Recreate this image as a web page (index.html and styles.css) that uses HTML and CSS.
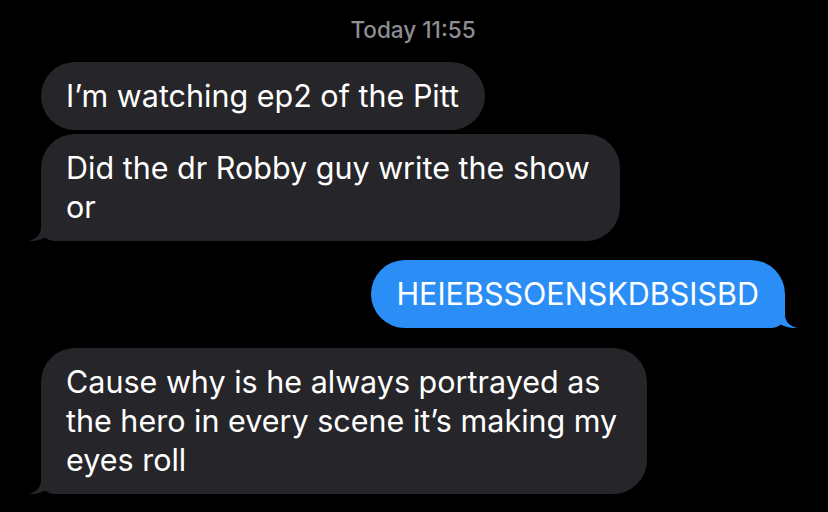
FILE: index.html
```html
<!DOCTYPE html>
<html>
<head>
<meta charset="utf-8">
<link rel="stylesheet" href="styles.css">
</head>
<body>
<div class="thread">
  <div class="stamp">Today 11:55</div>
  <div class="bubble them first">I’m watching ep2 of the Pitt</div>
  <div class="bubble them tail-left gap-s">Did the dr Robby guy write the show<br>or<svg class="tail" width="28" height="26" viewBox="0 0 28 26"><path d="M13 0 L13 13 C13 20 7 25 0 26 C7 26.5 13 25 17 22.5 C20 25 24 26 28 26 L28 0 Z"/></svg></div>
  <div class="bubble me tail-right gap-l">HEIEBSSOENSKDBSISBD<svg class="tail" width="28" height="26" viewBox="0 0 28 26"><path d="M13 0 L13 13 C13 20 7 25 0 26 C7 26.5 13 25 17 22.5 C20 25 24 26 28 26 L28 0 Z"/></svg></div>
  <div class="bubble them tail-left gap-l2">Cause why is he always portrayed as<br>the hero in every scene it’s making my<br>eyes roll<svg class="tail" width="28" height="26" viewBox="0 0 28 26"><path d="M13 0 L13 13 C13 20 7 25 0 26 C7 26.5 13 25 17 22.5 C20 25 24 26 28 26 L28 0 Z"/></svg></div>
</div>
</body>
</html>
```
FILE: styles.css
```css
html, body {
  margin: 0;
  padding: 0;
  background: #000;
}
body {
  width: 828px;
  height: 512px;
  overflow: hidden;
  font-family: Inter, "Liberation Sans", Arial, sans-serif;
}
.thread {
  display: flex;
  flex-direction: column;
  padding: 17px 43px 0 41px;
}
.stamp {
  align-self: center;
  color: #8e8e93;
  font-size: 22.5px;
  font-weight: 500;
  line-height: 26px;
  margin-bottom: 19px;
}
.bubble {
  position: relative;
  align-self: flex-start;
  color: #fff;
  font-size: 30.5px;
  line-height: 39px;
  padding: 14px 26px 15px 25px;
  border-radius: 34px;
  white-space: nowrap;
}
.them {
  background: #262529;
}
.me {
  align-self: flex-end;
  background: #2a8ef6;
}
.gap-s { margin-top: 4px; }
.gap-l { margin-top: 19px; }
.gap-l2 { margin-top: 20px; }
.tail-left {
  border-bottom-left-radius: 16px;
  padding-right: 30px;
}
.tail-right {
  border-bottom-right-radius: 16px;
}
.tail {
  position: absolute;
  bottom: 0;
  display: block;
}
.tail-left .tail {
  left: -13px;
}
.tail-right .tail {
  right: -13px;
  transform: scaleX(-1);
}
.them .tail path { fill: #262529; }
.me .tail path { fill: #2a8ef6; }
```
